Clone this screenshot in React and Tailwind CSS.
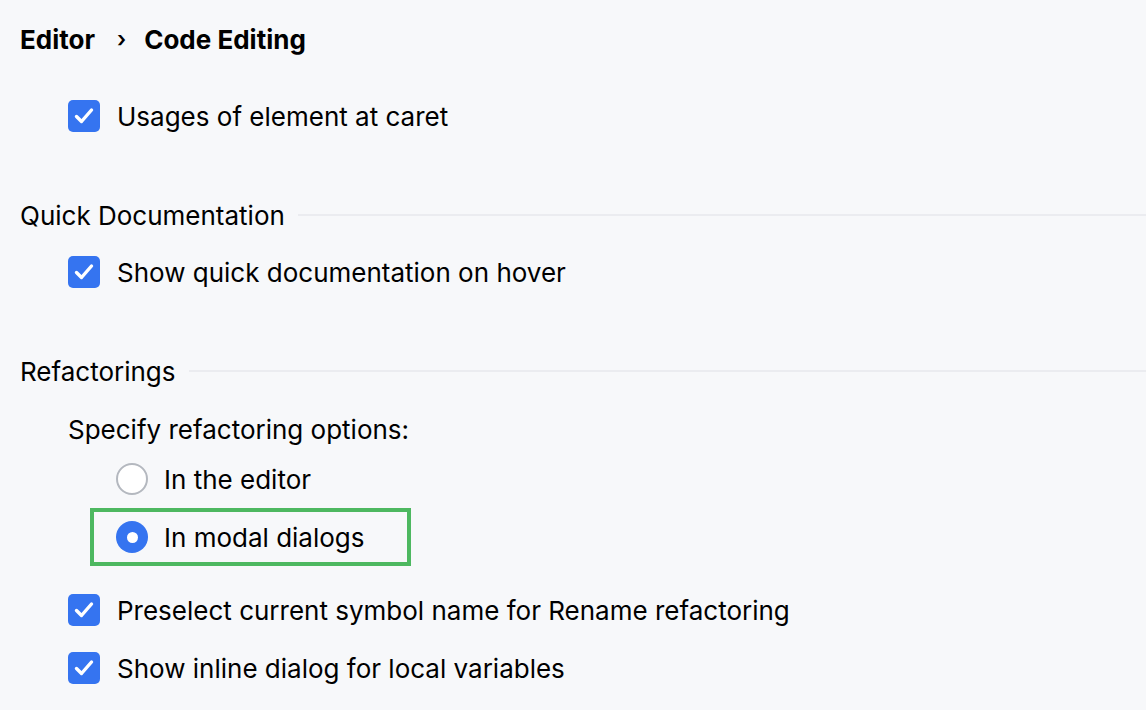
import React from 'react';

const font = { fontFamily: 'Inter, "Noto Sans", sans-serif' };

const Checkbox = () => (
    <span className="flex h-8 w-8 shrink-0 items-center justify-center rounded-[5px] bg-[#3574f0]">
        <svg width="32" height="32" viewBox="0 0 32 32" fill="none">
            <path d="M8.5 16.5l5 5L23.5 10" stroke="#fff" strokeWidth="3.4" strokeLinecap="round" strokeLinejoin="round" />
        </svg>
    </span>
);

const CheckRow = ({ label, className = '' }) => (
    <div className={`flex h-[58px] items-center gap-[17px] pl-[48px] ${className}`}>
        <Checkbox />
        <span>{label}</span>
    </div>
);

const Radio = ({ checked }) =>
    checked ? (
        <span className="flex h-8 w-8 shrink-0 items-center justify-center rounded-full bg-[#3574f0]">
            <span className="h-[11px] w-[11px] rounded-full bg-white" />
        </span>
    ) : (
        <span className="h-8 w-8 shrink-0 rounded-full border-2 border-[#b4b8bf] bg-white" />
    );

const RadioRow = ({ label, checked, highlight, className = '' }) => (
    <div
        className={`ml-[70px] flex h-[58px] w-[321px] items-center gap-4 border-4 pl-[22px] ${
            highlight ? 'border-[#4db860]' : 'border-transparent'
        } ${className}`}
    >
        <Radio checked={checked} />
        <span className="whitespace-nowrap">{label}</span>
    </div>
);

const Section = ({ title, className = '' }) => (
    <div className={`flex h-10 items-center gap-[13px] ${className}`}>
        <span className="shrink-0">{title}</span>
        <div className="h-[2px] flex-1 bg-[#ebecf0]" />
    </div>
);

export default function App() {
    return (
        <div className="h-[710px] w-[1146px] overflow-hidden bg-[#f7f8fa] pl-5 text-[26px] text-[#000]" style={font}>
            <div className="flex h-[78px] items-center font-bold">
                <span>Editor</span>
                <span className="ml-[22px] mr-[18px] text-[22px] font-semibold">›</span>
                <span>Code Editing</span>
            </div>

            <CheckRow label="Usages of element at caret" className="mt-[9px]" />

            <Section title="Quick Documentation" className="mt-[50px]" />
            <CheckRow label="Show quick documentation on hover" className="mt-2" />

            <Section title="Refactorings" className="mt-[50px]" />
            <div className="mt-[18px] flex h-10 items-center pl-[48px]">Specify refactoring options:</div>
            <RadioRow label="In the editor" className="mt-px" />
            <RadioRow label="In modal dialogs" checked highlight />

            <CheckRow label="Preselect current symbol name for Rename refactoring" className="mt-[15px]" />
            <CheckRow label="Show inline dialog for local variables" />
        </div>
    );
}
